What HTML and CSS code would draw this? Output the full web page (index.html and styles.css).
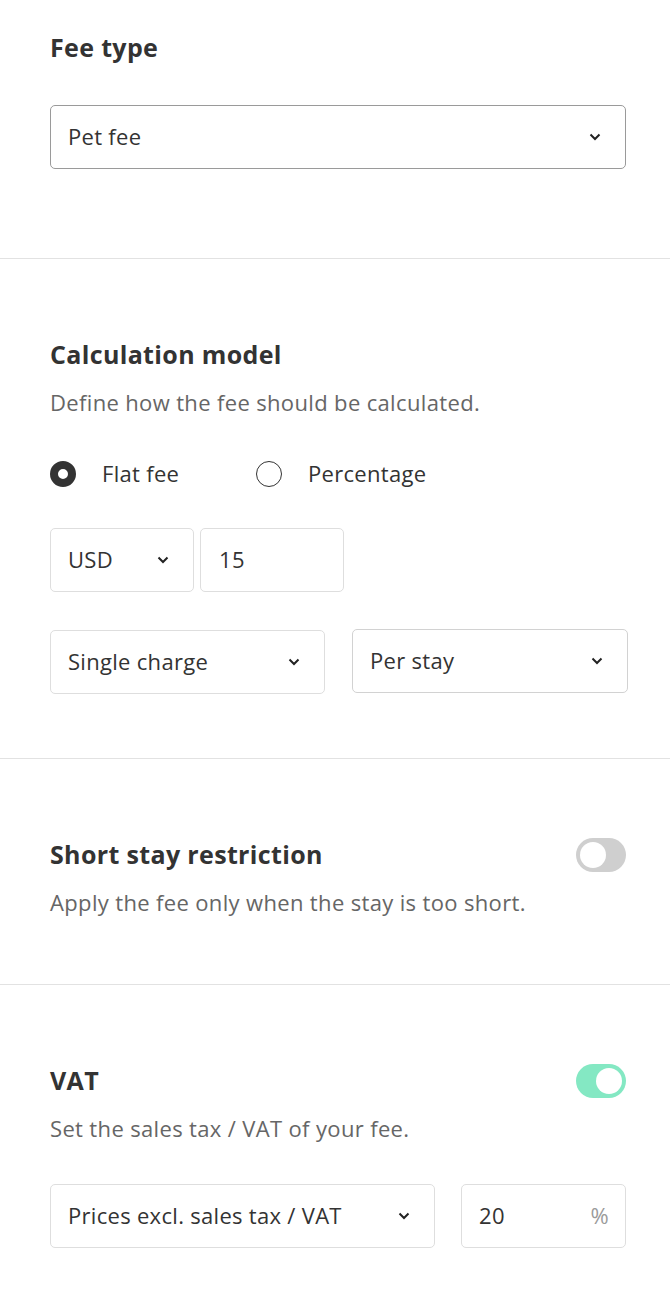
FILE: index.html
```html
<!DOCTYPE html>
<html lang="en">
<head>
<meta charset="utf-8">
<title>Fee settings</title>
<link rel="stylesheet" href="styles.css">
</head>
<body>
<div class="page">
  <section class="section section-first">
    <h2 class="heading">Fee type</h2>
    <div class="field select select-strong select-full">
      <span class="value">Pet fee</span>
      <svg class="chev" viewBox="0 0 12 8" width="12" height="8"><path d="M1.5 1.5l4.5 4.5 4.5-4.5" fill="none" stroke="#222" stroke-width="2"/></svg>
    </div>
  </section>

  <section class="section">
    <h2 class="heading">Calculation model</h2>
    <p class="desc">Define how the fee should be calculated.</p>
    <div class="radios">
      <label class="radio-opt radio-first"><span class="radio radio-on"></span><span class="radio-label">Flat fee</span></label>
      <label class="radio-opt"><span class="radio"></span><span class="radio-label">Percentage</span></label>
    </div>
    <div class="row row-currency">
      <div class="field select">
        <span class="value">USD</span>
        <svg class="chev" viewBox="0 0 12 8" width="12" height="8"><path d="M1.5 1.5l4.5 4.5 4.5-4.5" fill="none" stroke="#222" stroke-width="2"/></svg>
      </div>
      <div class="field input">
        <span class="value">15</span>
      </div>
    </div>
    <div class="row row-charge">
      <div class="field select">
        <span class="value">Single charge</span>
        <svg class="chev" viewBox="0 0 12 8" width="12" height="8"><path d="M1.5 1.5l4.5 4.5 4.5-4.5" fill="none" stroke="#222" stroke-width="2"/></svg>
      </div>
      <div class="field select select-mid select-shift">
        <span class="value">Per stay</span>
        <svg class="chev" viewBox="0 0 12 8" width="12" height="8"><path d="M1.5 1.5l4.5 4.5 4.5-4.5" fill="none" stroke="#222" stroke-width="2"/></svg>
      </div>
    </div>
  </section>

  <section class="section">
    <div class="head-row">
      <h2 class="heading">Short stay restriction</h2>
      <span class="toggle"><span class="knob"></span></span>
    </div>
    <p class="desc">Apply the fee only when the stay is too short.</p>
  </section>

  <section class="section section-last">
    <div class="head-row">
      <h2 class="heading">VAT</h2>
      <span class="toggle toggle-on"><span class="knob"></span></span>
    </div>
    <p class="desc">Set the sales tax / VAT of your fee.</p>
    <div class="row row-vat">
      <div class="field select">
        <span class="value">Prices excl. sales tax / VAT</span>
        <svg class="chev" viewBox="0 0 12 8" width="12" height="8"><path d="M1.5 1.5l4.5 4.5 4.5-4.5" fill="none" stroke="#222" stroke-width="2"/></svg>
      </div>
      <div class="field input input-pct">
        <span class="value">20</span>
        <span class="unit">%</span>
      </div>
    </div>
  </section>
</div>
</body>
</html>
```

FILE: styles.css
```css
* { box-sizing: border-box; }
html, body { margin: 0; padding: 0; background: #fff; }
body {
  font-family: "Open Sans", "Noto Sans", sans-serif;
  color: #333;
  width: 670px;
}
.page { width: 670px; }

.section {
  padding: 80px 44px 64px 50px;
  border-bottom: 1px solid #e2e2e2;
}
.section-first { padding-top: 32px; padding-bottom: 89px; }
.section-last { border-bottom: none; padding-bottom: 45px; }

.heading {
  margin: 0;
  font-size: 25px;
  line-height: 30px;
  padding-bottom: 2px;
  font-weight: 700;
  letter-spacing: 0.35px;
  color: #333;
}
.section-first .heading { margin-bottom: 41px; }

.desc {
  margin: 15px 0 0;
  padding-bottom: 2px;
  font-size: 22px;
  line-height: 32px;
  letter-spacing: 0.35px;
  color: #666;
}

.head-row {
  display: flex;
  align-items: center;
  justify-content: space-between;
  height: 32px;
}

.field {
  height: 64px;
  border: 1px solid #dedede;
  border-radius: 5px;
  display: flex;
  align-items: center;
  padding: 0 24px 3px 17px;
  font-size: 22px;
  letter-spacing: 0.3px;
  color: #333;
  background: #fff;
}
.select { justify-content: space-between; }
.select-strong { border-color: #9a9a9a; }
.select-mid { border-color: #d2d2d2; }
.chev { flex: none; display: block; margin-top: 3px; }

.radios {
  display: flex;
  align-items: center;
  margin-top: 38px;
  height: 32px;
}
.radio-opt {
  display: flex;
  align-items: center;
  gap: 26px;
  font-size: 22px;
  letter-spacing: 0.3px;
  color: #333;
}
.radio-label { padding-bottom: 2px; }
.radio-first { width: 206px; }
.radio {
  width: 26px;
  height: 26px;
  border-radius: 50%;
  border: 1.5px solid #333;
  flex: none;
  background: #fff;
}
.radio-on {
  border: 8.5px solid #333;
}

.row {
  display: flex;
  margin-top: 38px;
}
.row-currency { gap: 6px; }
.row-currency .field { width: 144px; }
.row-currency .input { padding-left: 18px; }
.row-charge { gap: 27px; }
.row-charge .field:first-child { width: 275px; }
.row-charge .field:last-child { width: 276px; margin-right: -2px; }
.select-shift { margin-top: -1px; }
.row-vat { gap: 26px; }
.row-vat .select { width: 385px; }
.row-vat .input { width: 165px; }

.input-pct { justify-content: space-between; padding-right: 16px; }
.unit { color: #9b9b9b; }

.toggle {
  width: 50px;
  height: 34px;
  border-radius: 17px;
  background: #cfcfcf;
  display: flex;
  align-items: center;
  padding: 0 4px;
  flex: none;
}
.toggle-on {
  background: #84e8c3;
  justify-content: flex-end;
}
.knob {
  width: 26px;
  height: 26px;
  border-radius: 50%;
  background: #fff;
}
```
